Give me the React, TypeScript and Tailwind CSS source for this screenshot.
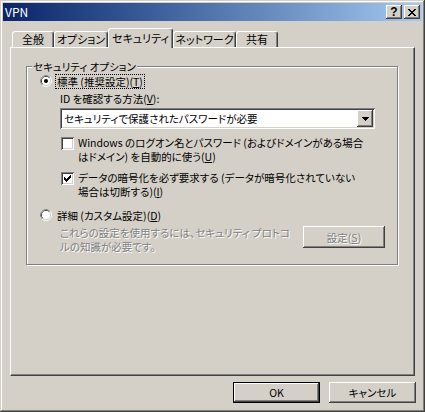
const raised =
  "shadow-[inset_-1px_-1px_#404040,inset_1px_1px_#fff,inset_-2px_-2px_#808080,inset_2px_2px_#d4d0c8]";
const sunken =
  "shadow-[inset_1px_1px_#808080,inset_-1px_-1px_#fff,inset_2px_2px_#404040,inset_-2px_-2px_#d4d0c8]";
const disabled = "text-[#808080] [text-shadow:1px_1px_0_#fff]";

function Pixels({ rows, color = "#000" }: { rows: string[]; color?: string }) {
  return (
    <svg width={rows[0].length} height={rows.length} shapeRendering="crispEdges" className="shrink-0">
      {rows.flatMap((r, y) =>
        [...r].map((ch, x) =>
          ch === "#" ? <rect key={`${x}-${y}`} x={x} y={y} width="1" height="1" fill={color} /> : null
        )
      )}
    </svg>
  );
}

const closeGlyph = ["##....##", ".##..##.", "..####..", "...##...", "..####..", ".##..##.", "##....##"];
const arrowGlyph = ["#######", ".#####.", "..###..", "...#..."];
const checkGlyph = ["......#", ".....##", "#...###", "##.###.", "#####..", ".###...", "..#...."];

function Radio({ checked, uid }: { checked?: boolean; uid: string }) {
  const clip = `url(#tl-${uid})`;
  return (
    <svg width="12" height="12" viewBox="0 0 12 12" className="shrink-0">
      <defs>
        <clipPath id={`tl-${uid}`}>
          <polygon points="0,0 12,0 0,12" />
        </clipPath>
      </defs>
      <circle cx="6" cy="6" r="5.5" fill="none" stroke="#fff" />
      <circle cx="6" cy="6" r="5.5" fill="none" stroke="#808080" clipPath={clip} />
      <circle cx="6" cy="6" r="4.5" fill="none" stroke="#d4d0c8" />
      <circle cx="6" cy="6" r="4.5" fill="none" stroke="#404040" clipPath={clip} />
      <circle cx="6" cy="6" r="4" fill="#fff" />
      {checked && <circle cx="6" cy="6" r="2" fill="#000" />}
    </svg>
  );
}

function Checkbox({ checked }: { checked?: boolean }) {
  return (
    <div className={`mt-[1px] ml-[1px] flex h-[13px] w-[13px] shrink-0 items-center justify-center bg-white ${sunken}`}>
      {checked && <Pixels rows={checkGlyph} />}
    </div>
  );
}

const tabs = [
  { label: "全般", w: "w-[42px]" },
  { label: "オプション", w: "w-[54px]" },
  { label: "セキュリティ", w: "w-[65px]", active: true },
  { label: "ネットワーク", w: "w-[63px]" },
  { label: "共有", w: "w-[42px]" },
];

export default function App() {
  return (
    <div
      className={`flex h-[412px] w-[425px] flex-col bg-[#d4d0c8] p-[3px] font-['Noto_Sans_CJK_JP',sans-serif] text-[10.5px] leading-[13px] text-black [font-feature-settings:'palt'] shadow-[inset_-1px_-1px_#404040,inset_1px_1px_#d4d0c8,inset_-2px_-2px_#808080,inset_2px_2px_#fff]`}
    >
      {/* title bar */}
      <div className="flex h-[18px] items-center bg-gradient-to-r from-[#0a246a] to-[#a6caf0] pl-[2px] pr-[2px]">
        <span className="text-[12px] leading-[18px] text-white">VPN</span>
        <div className="ml-auto flex gap-[2px]">
          <div className={`flex h-[14px] w-[16px] items-center justify-center bg-[#d4d0c8] ${raised}`}>
            <span className="font-['Liberation_Sans',sans-serif] text-[12px] font-bold leading-[12px]">?</span>
          </div>
          <div className={`flex h-[14px] w-[16px] items-center justify-center bg-[#d4d0c8] ${raised}`}>
            <Pixels rows={closeGlyph} />
          </div>
        </div>
      </div>

      <div className="flex flex-col px-[7px] pt-[7px]">
        {/* tabs */}
        <div className="flex h-[19px] items-end pl-[2px]">
          {tabs.map((t) => (
            <div
              key={t.label}
              className={`${t.w} flex items-center justify-center rounded-t-[3px] border-l border-t border-r border-white border-r-[#404040] bg-[#d4d0c8] text-[11px] shadow-[inset_-1px_0_#808080] ${
                t.active ? "relative z-10 -mb-[1px] h-[20px] pb-[1px]" : "h-[16px]"
              }`}
            >
              {t.label}
            </div>
          ))}
        </div>

        {/* panel */}
        <div className="h-[329px] border-l border-t border-white border-r border-b border-r-[#404040] border-b-[#404040] pl-[15px] pt-[18px] shadow-[inset_-1px_-1px_#808080]">
          <div className="relative h-[199px] w-[372px] border border-[#808080] pl-[13px] pr-[12px] pt-[6px] shadow-[inset_1px_1px_#fff,1px_1px_#fff]">
            <span className="absolute left-[5px] top-[-7px] bg-[#d4d0c8] px-[1px]">セキュリティ オプション</span>

            <div className="flex h-[16px] items-center">
              <Radio checked uid="std" />
              <span className="ml-[3px] border border-dotted border-black px-[1px]">
                標準 (推奨設定)(<u>T</u>)
              </span>
            </div>

            <div className="flex flex-col pl-[20px]">
              <div className="mt-[3px]">
                ID を確認する方法(<u>V</u>):
              </div>
              <div className={`mt-[3px] flex h-[21px] w-[315px] items-center bg-white p-[2px] ${sunken}`}>
                <span className="flex-1 pl-[2px] whitespace-nowrap">セキュリティで保護されたパスワードが必要</span>
                <div className={`flex h-[17px] w-[16px] items-center justify-center bg-[#d4d0c8] ${raised}`}>
                  <Pixels rows={arrowGlyph} />
                </div>
              </div>

              <div className="mt-[7px] flex items-start">
                <Checkbox />
                <span className="ml-[4px] whitespace-nowrap leading-[14px]">
                  Windows のログオン名とパスワード (およびドメインがある場合
                  <br />
                  はドメイン) を自動的に使う(<u>U</u>)
                </span>
              </div>

              <div className="mt-[7px] flex items-start">
                <Checkbox checked />
                <span className="ml-[4px] whitespace-nowrap leading-[14px]">
                  データの暗号化を必ず要求する (データが暗号化されていない
                  <br />
                  場合は切断する)(<u>I</u>)
                </span>
              </div>
            </div>

            <div className="mt-[8px] flex h-[16px] items-center">
              <Radio uid="adv" />
              <span className="ml-[5px]">
                詳細 (カスタム設定)(<u>D</u>)
              </span>
            </div>

            <div className="mt-[3px] flex items-start pl-[20px]">
              <span className={`whitespace-nowrap leading-[14px] ${disabled}`}>
                これらの設定を使用するには、セキュリティ プロトコ
                <br />
                ルの知識が必要です。
              </span>
              <div className={`ml-auto flex h-[22px] w-[82px] items-center justify-center bg-[#d4d0c8] ${raised}`}>
                <span className={disabled}>
                  設定(<u>S</u>)
                </span>
              </div>
            </div>
          </div>
        </div>
      </div>

      {/* dialog buttons */}
      <div className="mt-[6px] flex justify-end gap-[9px] pr-[6px]">
        <div className="flex h-[21px] w-[87px] border border-black">
          <div className={`flex flex-1 items-center justify-center bg-[#d4d0c8] ${raised}`}>OK</div>
        </div>
        <div className={`flex h-[21px] w-[87px] items-center justify-center bg-[#d4d0c8] ${raised}`}>キャンセル</div>
      </div>
    </div>
  );
}
